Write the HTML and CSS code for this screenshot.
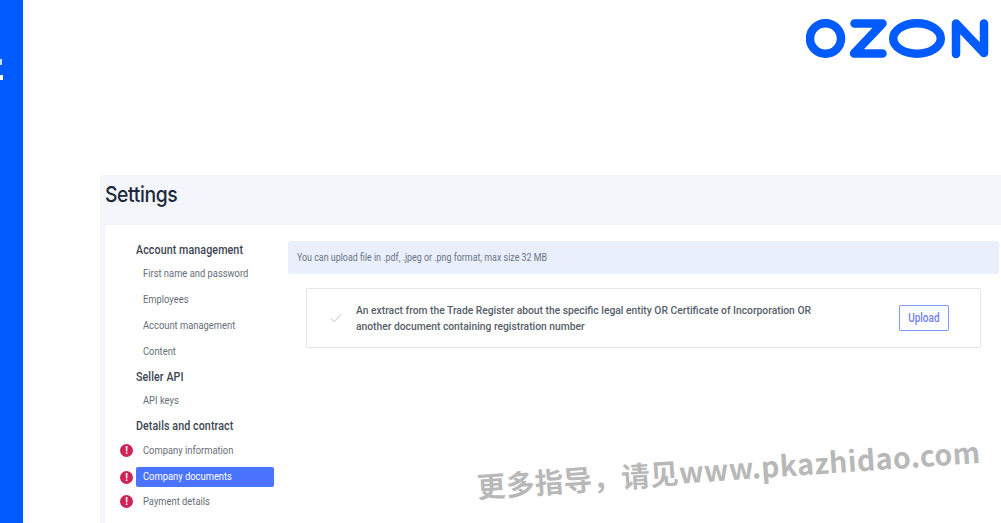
FILE: index.html
```html
<!DOCTYPE html>
<html lang="en">
<head>
<meta charset="utf-8">
<title>Settings</title>
<link rel="stylesheet" href="styles.css">
</head>
<body>
<div class="page">
  <aside class="rail"><i class="mark mark-a"></i><i class="mark mark-b"></i></aside>
  <main class="main">
    <header class="top">
      <svg class="logo" viewBox="0 0 183 41" width="183" height="41" aria-label="OZON">
        <g fill="none" stroke="#005bff" stroke-width="8.5">
          <ellipse cx="19.5" cy="20.5" rx="15.5" ry="15.2"/>
          <ellipse cx="111" cy="20.5" rx="23.8" ry="15.2"/>
        </g>
        <g fill="none" stroke="#005bff" stroke-width="8.5" stroke-linecap="round" stroke-linejoin="round">
          <path d="M48.5 5.5H76.5L48 35.5H76.5"/>
          <path d="M150 36V5.5L178 35V5.5"/>
        </g>
      </svg>
    </header>
    <section class="panel">
      <h1 class="title"><span class="t">Settings</span></h1>
      <div class="card">
        <nav class="nav">
          <div class="head"><span class="t">Account management</span></div>
          <div class="item"><span class="t">First name and password</span></div>
          <div class="item"><span class="t">Employees</span></div>
          <div class="item"><span class="t">Account management</span></div>
          <div class="item"><span class="t">Content</span></div>
          <div class="head after-items"><span class="t">Seller API</span></div>
          <div class="item short"><span class="t">API keys</span></div>
          <div class="head before-warn"><span class="t">Details and contract</span></div>
          <div class="item warn"><span class="badge">!</span><span class="t">Company information</span></div>
          <div class="item warn active"><span class="badge">!</span><span class="t">Company documents</span></div>
          <div class="item warn"><span class="badge">!</span><span class="t">Payment details</span></div>
        </nav>
        <div class="content">
          <div class="info"><span class="t">You can upload file in .pdf, .jpeg or .png format, max size 32 MB</span></div>
          <div class="doc">
            <svg class="check" viewBox="0 0 12 10" width="12" height="10"><path d="M1 5.5L4.3 8.6L11 1.4" fill="none" stroke="#d5d8dd" stroke-width="1.2"/></svg>
            <p class="doc-text"><span class="t">An extract from the Trade Register about the specific legal entity OR Certificate of Incorporation OR<br>another document containing registration number</span></p>
            <button class="upload"><span class="t">Upload</span></button>
          </div>
        </div>
      </div>
    </section>
  </main>
</div>
<div class="watermark">更多指导，请见www.pkazhidao.com</div>
</body>
</html>
```
FILE: styles.css
```css
* { box-sizing: border-box; }
html, body { margin: 0; height: 100%; overflow: hidden; background: #fff; }
body { font-family: Roboto, "Liberation Sans", sans-serif; }
.t { display: inline-block; white-space: nowrap; transform-origin: left center; }
.page { display: flex; height: 523px; }
.rail { width: 23px; background: #005bff; position: relative; flex: none; }
.mark { position: absolute; left: 0; background: #fff; }
.mark-a { top: 59px; width: 2px; height: 6px; opacity: .8; }
.mark-b { top: 75px; width: 3px; height: 5px; }
.main { flex: 1; display: flex; flex-direction: column; min-width: 0; }
.top { height: 175px; flex: none; display: flex; justify-content: flex-end; padding: 18px 12px 0 0; }
.logo { display: block; }
.panel { flex: 1; margin-left: 77px; background: #f4f6fb; display: flex; flex-direction: column; padding-left: 5px; min-height: 0; }
.title { margin: 0; height: 50px; line-height: 38px; font-family: Inter, sans-serif; font-weight: 500; font-size: 22px; letter-spacing: -.45px; color: #1d2a3a; flex: none; }
.title .t { transform: scaleX(.88); }
.card { flex: 1; background: #fff; display: flex; border-radius: 3px 0 0 0; min-height: 0; }
.nav { width: 183px; flex: none; padding: 13px 0 0 31px; color: #666e79; font-size: 11.5px; }
.head { height: 24px; line-height: 25px; font-size: 12px; font-weight: 500; color: #3c4552; letter-spacing: .1px; }
.head .t { transform: scaleX(.89); }
.after-items { margin-top: -1px; }
.before-warn { height: 25px; }
.item { height: 26px; line-height: 23px; padding-left: 7px; position: relative; width: 138px; }
.item .t { transform: scaleX(.815); }
.item.short { height: 25px; }
.warn { height: 25.5px; }
.active { background: #4a73ff; color: #fff; border-radius: 2px; height: 20.5px; line-height: 19px; margin: 2px 0 3px; }
.badge { position: absolute; left: -16px; top: 5px; width: 13px; height: 13px; border-radius: 50%; background: #cf2257; color: #fff; font-size: 10px; font-weight: 700; line-height: 13px; text-align: center; }
.active .badge { top: 4px; }
.content { flex: 1; padding: 16px 2px 0 0; min-width: 0; }
.info { height: 33px; line-height: 33px; background: #e9effd; border-radius: 3px; padding-left: 9px; font-size: 10.5px; color: #6a7482; }
.info .t { transform: scaleX(.846); }
.doc { margin: 14px 18px 0 18px; height: 60px; border: 1px solid #e4e6ea; border-radius: 2px; display: flex; align-items: center; padding: 0 31px 0 23px; background: #fff; }
.check { flex: none; }
.doc-text { margin: 0 0 0 14px; font-size: 11.5px; font-weight: 500; line-height: 16px; color: #565e6a; }
.doc-text .t { transform: scaleX(.895); }
.upload { margin-left: auto; width: 50px; height: 26px; background: #fff; border: 1px solid #7d97fb; border-radius: 2px; padding: 0; color: #6f81f5; font: 500 12px Roboto, sans-serif; }
.upload .t { transform: scaleX(.83); transform-origin: center; }
.watermark { position: absolute; left: 477px; top: 465px; font-family: "Noto Sans CJK SC", "DejaVu Sans", sans-serif; font-weight: 700; font-size: 28.5px; letter-spacing: .4px; color: #b8b8b8; transform: rotate(-4deg); transform-origin: left center; white-space: nowrap; }
```
